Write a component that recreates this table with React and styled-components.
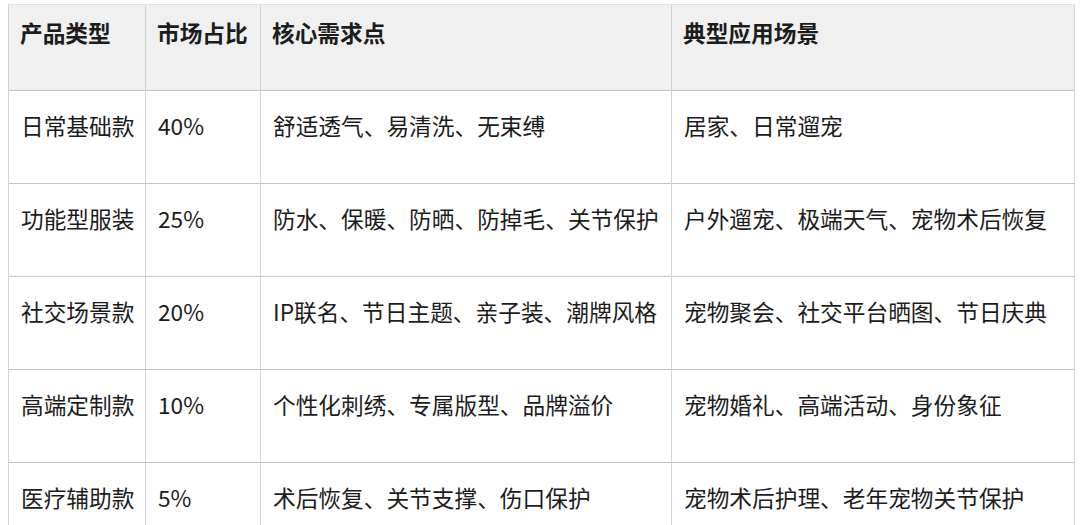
import React from "react";
import styled, { createGlobalStyle } from "styled-components";

const Global = createGlobalStyle`
  html, body { margin: 0; padding: 0; background: #ffffff; }
  body { overflow: hidden; }
`;

const Page = styled.div`
  padding: 4px 0 0 8px;
  font-family: "Noto Sans CJK SC", "Noto Sans", sans-serif;
  color: #1c1c1c;
`;

const Table = styled.div`
  display: grid;
  grid-template-columns: 137px 115px 411px 403px;
  grid-auto-rows: 93px;
  grid-template-rows: 86px;
  width: max-content;
  border-left: 1px solid #d2d2d2;
  border-top: 1px solid #e2e2e2;
`;

const Cell = styled.div`
  box-sizing: border-box;
  border-right: 1px solid #d2d2d2;
  border-bottom: 1px solid #c4c4c4;
  padding: ${(p) => (p.$head ? "11px 0 0 11px" : "18px 0 0 12px")};
  background: ${(p) => (p.$head ? "#f0f0f0" : "#ffffff")};
  font-size: 22.7px;
  line-height: 34px;
  font-weight: ${(p) => (p.$head ? 700 : 400)};
  white-space: nowrap;
  overflow: hidden;
`;

const headers = ["产品类型", "市场占比", "核心需求点", "典型应用场景"];

const rows = [
  ["日常基础款", "40%", "舒适透气、易清洗、无束缚", "居家、日常遛宠"],
  ["功能型服装", "25%", "防水、保暖、防晒、防掉毛、关节保护", "户外遛宠、极端天气、宠物术后恢复"],
  ["社交场景款", "20%", "IP联名、节日主题、亲子装、潮牌风格", "宠物聚会、社交平台晒图、节日庆典"],
  ["高端定制款", "10%", "个性化刺绣、专属版型、品牌溢价", "宠物婚礼、高端活动、身份象征"],
  ["医疗辅助款", "5%", "术后恢复、关节支撑、伤口保护", "宠物术后护理、老年宠物关节保护"],
];

export default function App() {
  return (
    <>
      <Global />
      <Page>
        <Table role="table">
          {headers.map((h) => (
            <Cell key={h} $head role="columnheader">
              {h}
            </Cell>
          ))}
          {rows.map((r) =>
            r.map((c, i) => (
              <Cell key={r[0] + i} role="cell">
                {c}
              </Cell>
            ))
          )}
        </Table>
      </Page>
    </>
  );
}
